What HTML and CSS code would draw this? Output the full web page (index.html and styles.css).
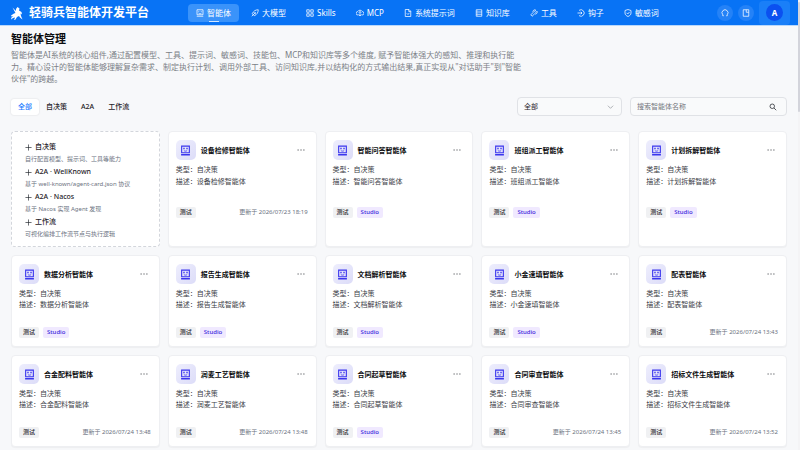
FILE: index.html
```
<!doctype html>
<html lang="zh-CN">

<head>
	<meta charset="UTF-8">
	<meta name="viewport" content="width=device-width, initial-scale=1">
	<title>轻骑兵智能体开发平台</title>
	<link rel="stylesheet" href="styles.css">
</head>

<body>
	<!-- 图标 -->
	<svg class="sprite" aria-hidden="true">
		<symbol id="i-bot" viewBox="0 0 16 16"><path d="M2 1.5h12v10H2zM1.5 14.5h13M5.5 4.500v1.500M10.500 4.500v1.500M5 8.200c1.500 1.600 4.500 1.600 6 0"/></symbol>
		<symbol id="i-rocket" viewBox="0 0 16 16"><path d="M14.500 1.500C9 1.500 5 4 2.500 9.500l4 4C12 11 14.500 7 14.500 1.500zM1.500 14.500l8-8M6 6.500l3.500 3.500"/></symbol>
		<symbol id="i-grid" viewBox="0 0 16 16"><path d="M1.500 1.500h5v5h-5zM9.500 1.500h5v5h-5zM1.500 9.500h5v5h-5zM9.500 9.500h5v5h-5z"/></symbol>
		<symbol id="i-mcp" viewBox="0 0 16 16"><path d="M5 12H4a3.500 3.500 0 0 1-.5-7C5 1.500 11 1.500 12.500 5a3.500 3.500 0 0 1-.5 7h-1M8 5v9M5.500 7.500 8 5l2.500 2.500M5.500 11 8 14l2.500-3"/></symbol>
		<symbol id="i-doc" viewBox="0 0 16 16"><path d="M2.500 1h7.500l3.500 3.500V15h-11zM9.500 1v4h4M5.500 8.500 8 11l3-3.500"/></symbol>
		<symbol id="i-book" viewBox="0 0 16 16"><path d="M2.500 1.500h11v13h-11zM2.500 6h11M2.500 10.500h11M5 3.800h1M5 8.300h1M5 12.500h1"/></symbol>
		<symbol id="i-tool" viewBox="0 0 16 16"><path d="M14 4.500 11.500 7 9 4.500 11.500 2C8 .5 5 3.500 6.200 7L1.500 11.800l2.700 2.700L9 9.800c3.500 1.200 6.500-1.800 5-5.300z"/></symbol>
		<symbol id="i-hook" viewBox="0 0 16 16"><path d="M4 2.800a6.500 6.500 0 1 1 0 10.400M1 8h9M7.500 5.500 10 8l-2.500 2.500"/></symbol>
		<symbol id="i-shield" viewBox="0 0 16 16"><path d="M8 1l6 2v5c0 3.500-2.500 5.500-6 7-3.500-1.500-6-3.500-6-7V3zM5 7.500 7.500 10 11 6"/></symbol>
		<symbol id="i-headset" viewBox="0 0 16 16"><path d="M5.500 13.500H3.500v-2A6 6 0 1 1 12.500 11.500v2h-2"/></symbol>
		<symbol id="i-manual" viewBox="0 0 16 16"><path d="M2.500 1.500h11v13h-11zM8.500 1.500v5h5"/></symbol>
		<symbol id="i-search" viewBox="0 0 16 16"><path d="M11 6.500a4.500 4.500 0 1 1-9 0 4.500 4.500 0 0 1 9 0zM10 10l4.500 4.500"/></symbol>
		<symbol id="i-down" viewBox="0 0 16 16"><path d="M2 5l6 6 6-6"/></symbol>
		<symbol id="i-plus" viewBox="0 0 16 16"><path d="M8 1v14M1 8h14"/></symbol>
		<symbol id="i-more" viewBox="0 0 16 16"><path d="M1 8h2.500M6.800 8h2.500M12.500 8H15"/></symbol>
		<symbol id="i-robot" viewBox="0 0 20 20"><path fill="none" stroke="#3a35ee" stroke-width="2" d="M3 2h14v12H3z"/><path fill="#3a35ee" d="M6 5h2.500v2.500H6zM11.500 5H14v2.500h-2.500zM2 16.500h16V19H2z"/><path fill="none" stroke="#3a35ee" stroke-width="1.500" d="M7 10c1.500 1.500 4.500 1.500 6 0"/></symbol>
	</svg>

	<div class="shell">
		<div class="page">
			<header class="header">
				<a class="brand" href="#">
					<svg class="logo" viewBox="0 0 24 28" aria-hidden="true"><path d="M3 3l7 7V6l3-4 4 3-1 4 5 3 1 5-3-2 1 5 3 7-5-4-2-3-4 2-3 5-3 2 2-6-4 1-4 3 1-4 4-3-4 1-1-2 6-4 3-1z"/></svg>
					<span>轻骑兵智能体开发平台</span>
				</a>
				<nav class="nav">
					<a class="active" href="#"><svg class="icon"><use href="#i-bot"/></svg>智能体</a>
					<a href="#"><svg class="icon"><use href="#i-rocket"/></svg>大模型</a>
					<a href="#"><svg class="icon"><use href="#i-grid"/></svg>Skills</a>
					<a href="#"><svg class="icon"><use href="#i-mcp"/></svg>MCP</a>
					<a href="#"><svg class="icon"><use href="#i-doc"/></svg>系统提示词</a>
					<a href="#"><svg class="icon"><use href="#i-book"/></svg>知识库</a>
					<a href="#"><svg class="icon"><use href="#i-tool"/></svg>工具</a>
					<a href="#"><svg class="icon"><use href="#i-hook"/></svg>钩子</a>
					<a href="#"><svg class="icon"><use href="#i-shield"/></svg>敏感词</a>
				</nav>
				<div class="actions">
					<button class="round" aria-label="客服"><svg class="icon"><use href="#i-headset"/></svg></button>
					<button class="round" aria-label="文档"><svg class="icon"><use href="#i-manual"/></svg></button>
					<button class="user"><span class="avatar">A</span></button>
				</div>
			</header>

			<main class="main">
				<h1>智能体管理</h1>
				<p class="intro">智能体是AI系统的核心组件,通过配置模型、工具、提示词、敏感词、技能包、MCP和知识库等多个维度, 赋予智能体强大的感知、推理和执行能<br>力。精心设计的智能体能够理解复杂需求、制定执行计划、调用外部工具、访问知识库,并以结构化的方式输出结果,真正实现从"对话助手"到"智能<br>伙伴"的跨越。</p>

				<div class="toolbar">
					<div class="tabs">
						<button class="on">全部</button>
						<button>自决策</button>
						<button>A2A</button>
						<button>工作流</button>
					</div>
					<div class="field filter">
						<select aria-label="状态">
							<option>全部</option>
						</select>
						<svg class="icon"><use href="#i-down"/></svg>
					</div>
					<div class="field search">
						<input type="text" placeholder="搜索智能体名称" aria-label="搜索智能体名称">
						<button aria-label="搜索"><svg class="icon"><use href="#i-search"/></svg></button>
					</div>
				</div>

				<div class="grid">
					<div class="card create">
						<button><b><svg class="icon"><use href="#i-plus"/></svg>自决策</b><span>自行配置模型、提示词、工具等能力</span></button>
						<button><b><svg class="icon"><use href="#i-plus"/></svg>A2A · WellKnown</b><span>基于 well-known/agent-card.json 协议</span></button>
						<button><b><svg class="icon"><use href="#i-plus"/></svg>A2A · Nacos</b><span>基于 Nacos 实现 Agent 发现</span></button>
						<button><b><svg class="icon"><use href="#i-plus"/></svg>工作流</b><span>可视化编排工作流节点与执行逻辑</span></button>
					</div>
					<article class="card tall">
						<header><span class="face"><svg><use href="#i-robot"/></svg></span><h2>设备检修智能体</h2><button class="more" aria-label="更多"><svg class="icon"><use href="#i-more"/></svg></button></header>
						<p>类型：自决策</p>
						<p>描述：设备检修智能体</p>
						<footer><span class="tag">测试</span><time>更新于 2026/07/23 18:19</time></footer>
					</article>
					<article class="card tall">
						<header><span class="face"><svg><use href="#i-robot"/></svg></span><h2>智能问答智能体</h2><button class="more" aria-label="更多"><svg class="icon"><use href="#i-more"/></svg></button></header>
						<p>类型：自决策</p>
						<p>描述：智能问答智能体</p>
						<footer><span class="tag">测试</span><span class="tag studio">Studio</span></footer>
					</article>
					<article class="card tall">
						<header><span class="face"><svg><use href="#i-robot"/></svg></span><h2>班组派工智能体</h2><button class="more" aria-label="更多"><svg class="icon"><use href="#i-more"/></svg></button></header>
						<p>类型：自决策</p>
						<p>描述：班组派工智能体</p>
						<footer><span class="tag">测试</span><span class="tag studio">Studio</span></footer>
					</article>
					<article class="card tall">
						<header><span class="face"><svg><use href="#i-robot"/></svg></span><h2>计划拆解智能体</h2><button class="more" aria-label="更多"><svg class="icon"><use href="#i-more"/></svg></button></header>
						<p>类型：自决策</p>
						<p>描述：计划拆解智能体</p>
						<footer><span class="tag">测试</span><span class="tag studio">Studio</span></footer>
					</article>

					<article class="card">
						<header><span class="face"><svg><use href="#i-robot"/></svg></span><h2>数据分析智能体</h2><button class="more" aria-label="更多"><svg class="icon"><use href="#i-more"/></svg></button></header>
						<p>类型：自决策</p>
						<p>描述：数据分析智能体</p>
						<footer><span class="tag">测试</span><span class="tag studio">Studio</span></footer>
					</article>
					<article class="card">
						<header><span class="face"><svg><use href="#i-robot"/></svg></span><h2>报告生成智能体</h2><button class="more" aria-label="更多"><svg class="icon"><use href="#i-more"/></svg></button></header>
						<p>类型：自决策</p>
						<p>描述：报告生成智能体</p>
						<footer><span class="tag">测试</span><span class="tag studio">Studio</span></footer>
					</article>
					<article class="card">
						<header><span class="face"><svg><use href="#i-robot"/></svg></span><h2>文档解析智能体</h2><button class="more" aria-label="更多"><svg class="icon"><use href="#i-more"/></svg></button></header>
						<p>类型：自决策</p>
						<p>描述：文档解析智能体</p>
						<footer><span class="tag">测试</span><span class="tag studio">Studio</span></footer>
					</article>
					<article class="card">
						<header><span class="face"><svg><use href="#i-robot"/></svg></span><h2>小金速填智能体</h2><button class="more" aria-label="更多"><svg class="icon"><use href="#i-more"/></svg></button></header>
						<p>类型：自决策</p>
						<p>描述：小金速填智能体</p>
						<footer><span class="tag">测试</span><span class="tag studio">Studio</span></footer>
					</article>
					<article class="card">
						<header><span class="face"><svg><use href="#i-robot"/></svg></span><h2>配表智能体</h2><button class="more" aria-label="更多"><svg class="icon"><use href="#i-more"/></svg></button></header>
						<p>类型：自决策</p>
						<p>描述：配表智能体</p>
						<footer><span class="tag">测试</span><time>更新于 2026/07/24 13:43</time></footer>
					</article>

					<article class="card">
						<header><span class="face"><svg><use href="#i-robot"/></svg></span><h2>合金配料智能体</h2><button class="more" aria-label="更多"><svg class="icon"><use href="#i-more"/></svg></button></header>
						<p>类型：自决策</p>
						<p>描述：合金配料智能体</p>
						<footer><span class="tag">测试</span><time>更新于 2026/07/24 13:48</time></footer>
					</article>
					<article class="card">
						<header><span class="face"><svg><use href="#i-robot"/></svg></span><h2>润麦工艺智能体</h2><button class="more" aria-label="更多"><svg class="icon"><use href="#i-more"/></svg></button></header>
						<p>类型：自决策</p>
						<p>描述：润麦工艺智能体</p>
						<footer><span class="tag">测试</span><time>更新于 2026/07/24 13:48</time></footer>
					</article>
					<article class="card">
						<header><span class="face"><svg><use href="#i-robot"/></svg></span><h2>合同起草智能体</h2><button class="more" aria-label="更多"><svg class="icon"><use href="#i-more"/></svg></button></header>
						<p>类型：自决策</p>
						<p>描述：合同起草智能体</p>
						<footer><span class="tag">测试</span><span class="tag studio">Studio</span></footer>
					</article>
					<article class="card">
						<header><span class="face"><svg><use href="#i-robot"/></svg></span><h2>合同审查智能体</h2><button class="more" aria-label="更多"><svg class="icon"><use href="#i-more"/></svg></button></header>
						<p>类型：自决策</p>
						<p>描述：合同审查智能体</p>
						<footer><span class="tag">测试</span><time>更新于 2026/07/24 13:45</time></footer>
					</article>
					<article class="card">
						<header><span class="face"><svg><use href="#i-robot"/></svg></span><h2>招标文件生成智能体</h2><button class="more" aria-label="更多"><svg class="icon"><use href="#i-more"/></svg></button></header>
						<p>类型：自决策</p>
						<p>描述：招标文件生成智能体</p>
						<footer><span class="tag">测试</span><time>更新于 2026/07/24 13:52</time></footer>
					</article>
				</div>
			</main>
		</div>
		<div class="scrollbar"><div class="thumb"></div></div>
	</div>
</body>

</html>
```
FILE: styles.css
```
* {
	box-sizing: border-box;
	margin: 0;
	padding: 0;
}

body {
	background: #f7f8fa;
	color: #1f2329;
	font: 7px/11px "Noto Sans", "Noto Sans CJK SC", sans-serif;
}

button,
input,
select {
	border: 0;
	background: none;
	color: inherit;
	font: inherit;
}

button {
	cursor: pointer;
}

a {
	color: inherit;
	text-decoration: none;
}

.sprite {
	display: none;
}

.icon {
	display: block;
	flex: none;
	width: 8px;
	height: 8px;
	fill: none;
	stroke: currentColor;
	stroke-width: 1.5;
}

.shell {
	display: flex;
	min-height: 100vh;
}

.page {
	flex: 1;
	min-width: 0;
}

.scrollbar {
	width: 2px;
	padding-top: 2px;
	background: #f4f4f6;
}

.thumb {
	height: 110px;
	border-radius: 1px;
	background: #d3d4db;
}

/* 顶部导航 */
.header {
	display: flex;
	align-items: center;
	height: 26px;
	padding: 0 8px 0 11px;
	border-bottom: 1px solid #b9d8fb;
	background: #0873f5;
	color: #fff;
}

.brand {
	display: flex;
	align-items: center;
	gap: 6px;
	font-size: 12px;
	font-weight: 700;
	line-height: 18px;
	white-space: nowrap;
}

.logo {
	width: 12px;
	height: 14px;
	fill: #fff;
}

.nav {
	display: flex;
	gap: 4px;
	margin-left: 39px;
	font-size: 8px;
}

.nav a {
	display: flex;
	align-items: center;
	gap: 3px;
	height: 18px;
	padding: 0 8px;
	border-radius: 4px;
	white-space: nowrap;
}

.nav .active {
	position: relative;
	background: #3a93fa;
}

.nav .active::after {
	content: "";
	position: absolute;
	bottom: 0;
	left: 50%;
	width: 10px;
	height: 1px;
	margin-left: -5px;
	background: #d5e8ff;
}

.actions {
	display: flex;
	align-items: center;
	gap: 5px;
	margin-left: auto;
}

.round {
	display: grid;
	place-items: center;
	width: 16px;
	height: 16px;
	border-radius: 50%;
	background: #2482f7;
}

.user {
	display: grid;
	place-items: center;
	width: 31px;
	height: 24px;
	border-radius: 4px;
	background: #1a7ff8;
}

.avatar {
	width: 17px;
	height: 17px;
	border-radius: 50%;
	background: #0b50f0;
	font-size: 8px;
	font-weight: 700;
	line-height: 17px;
	text-align: center;
}

.main {
	padding: 4px 11px 3px;
}

h1 {
	color: #0c0d0f;
	font-size: 11px;
	line-height: 17px;
}

.intro {
	margin-top: 2px;
	color: #7b7f86;
	font-size: 8px;
	line-height: 12px;
}

/* 筛选栏 */
.toolbar {
	display: flex;
	align-items: center;
	gap: 8px;
	margin-top: 12px;
}

.tabs {
	display: flex;
	margin-right: auto;
}

.tabs button {
	height: 16px;
	padding: 0 7px;
	border-radius: 3px;
	font-size: 7px;
	font-weight: 500;
}

.tabs .on {
	background: #fff;
	box-shadow: 0 0 2px rgba(0, 0, 0, .14);
	color: #1677ff;
}

.field {
	display: flex;
	align-items: center;
	height: 19px;
	padding: 0 7px 0 6px;
	border: 1px solid #e0e2e6;
	border-radius: 4px;
	background: #f9fafb;
}

.field select,
.field input {
	flex: 1;
	min-width: 0;
	height: 17px;
	outline: 0;
	appearance: none;
}

.field input::placeholder {
	color: #74777d;
}

.filter {
	width: 105px;
}

.filter .icon {
	width: 7px;
	color: #8a8d93;
}

.search {
	width: 157px;
	padding-right: 9px;
}

/* 卡片列表 */
.grid {
	display: grid;
	grid-template-columns: repeat(5, 1fr);
	gap: 8px;
	margin-top: 15px;
}

.card {
	min-width: 0;
	padding: 8px 8px 8px 7px;
	border: 1px solid #eeeff2;
	border-radius: 4px;
	background: #fff;
	box-shadow: 0 1px 1px rgba(0, 0, 0, .04);
}

.card header {
	display: flex;
	align-items: center;
	gap: 5px;
	margin-bottom: 4px;
}

.face {
	display: grid;
	place-items: center;
	width: 20px;
	height: 20px;
	border-radius: 5px;
	background: linear-gradient(135deg, #eeeefd, #dcdcf8);
}

.face svg {
	width: 11px;
	height: 11px;
}

.card h2 {
	color: #0c0d0f;
	font-size: 7px;
	line-height: 11px;
}

.more {
	margin-left: auto;
	padding: 2px 3px;
}

.card p {
	color: #3c4047;
}

.card footer {
	display: flex;
	align-items: center;
	gap: 4px;
	margin-top: 17px;
}

.tall p {
	line-height: 12px;
}

.tall footer {
	margin-top: 19px;
}

.tag {
	padding: 0 4px;
	border-radius: 2px;
	background: #f0f1f3;
	font-size: 6px;
	font-weight: 500;
}

.studio {
	background: #f0e9ff;
	color: #3c28dc;
}

.card time {
	margin-left: auto;
	color: #6b7280;
	font-size: 6px;
}

.create {
	display: flex;
	flex-direction: column;
	gap: 1px;
	padding: 9px 13px 6px;
	border: 1px dashed #d3d6dc;
	box-shadow: none;
}

.create button {
	text-align: left;
	line-height: 12px;
}

.create b {
	display: flex;
	align-items: center;
	gap: 3px;
	font-weight: 500;
}

.create b .icon {
	width: 7px;
	height: 7px;
}

.create span {
	display: block;
	color: #6b7280;
	font-size: 6px;
}
```
